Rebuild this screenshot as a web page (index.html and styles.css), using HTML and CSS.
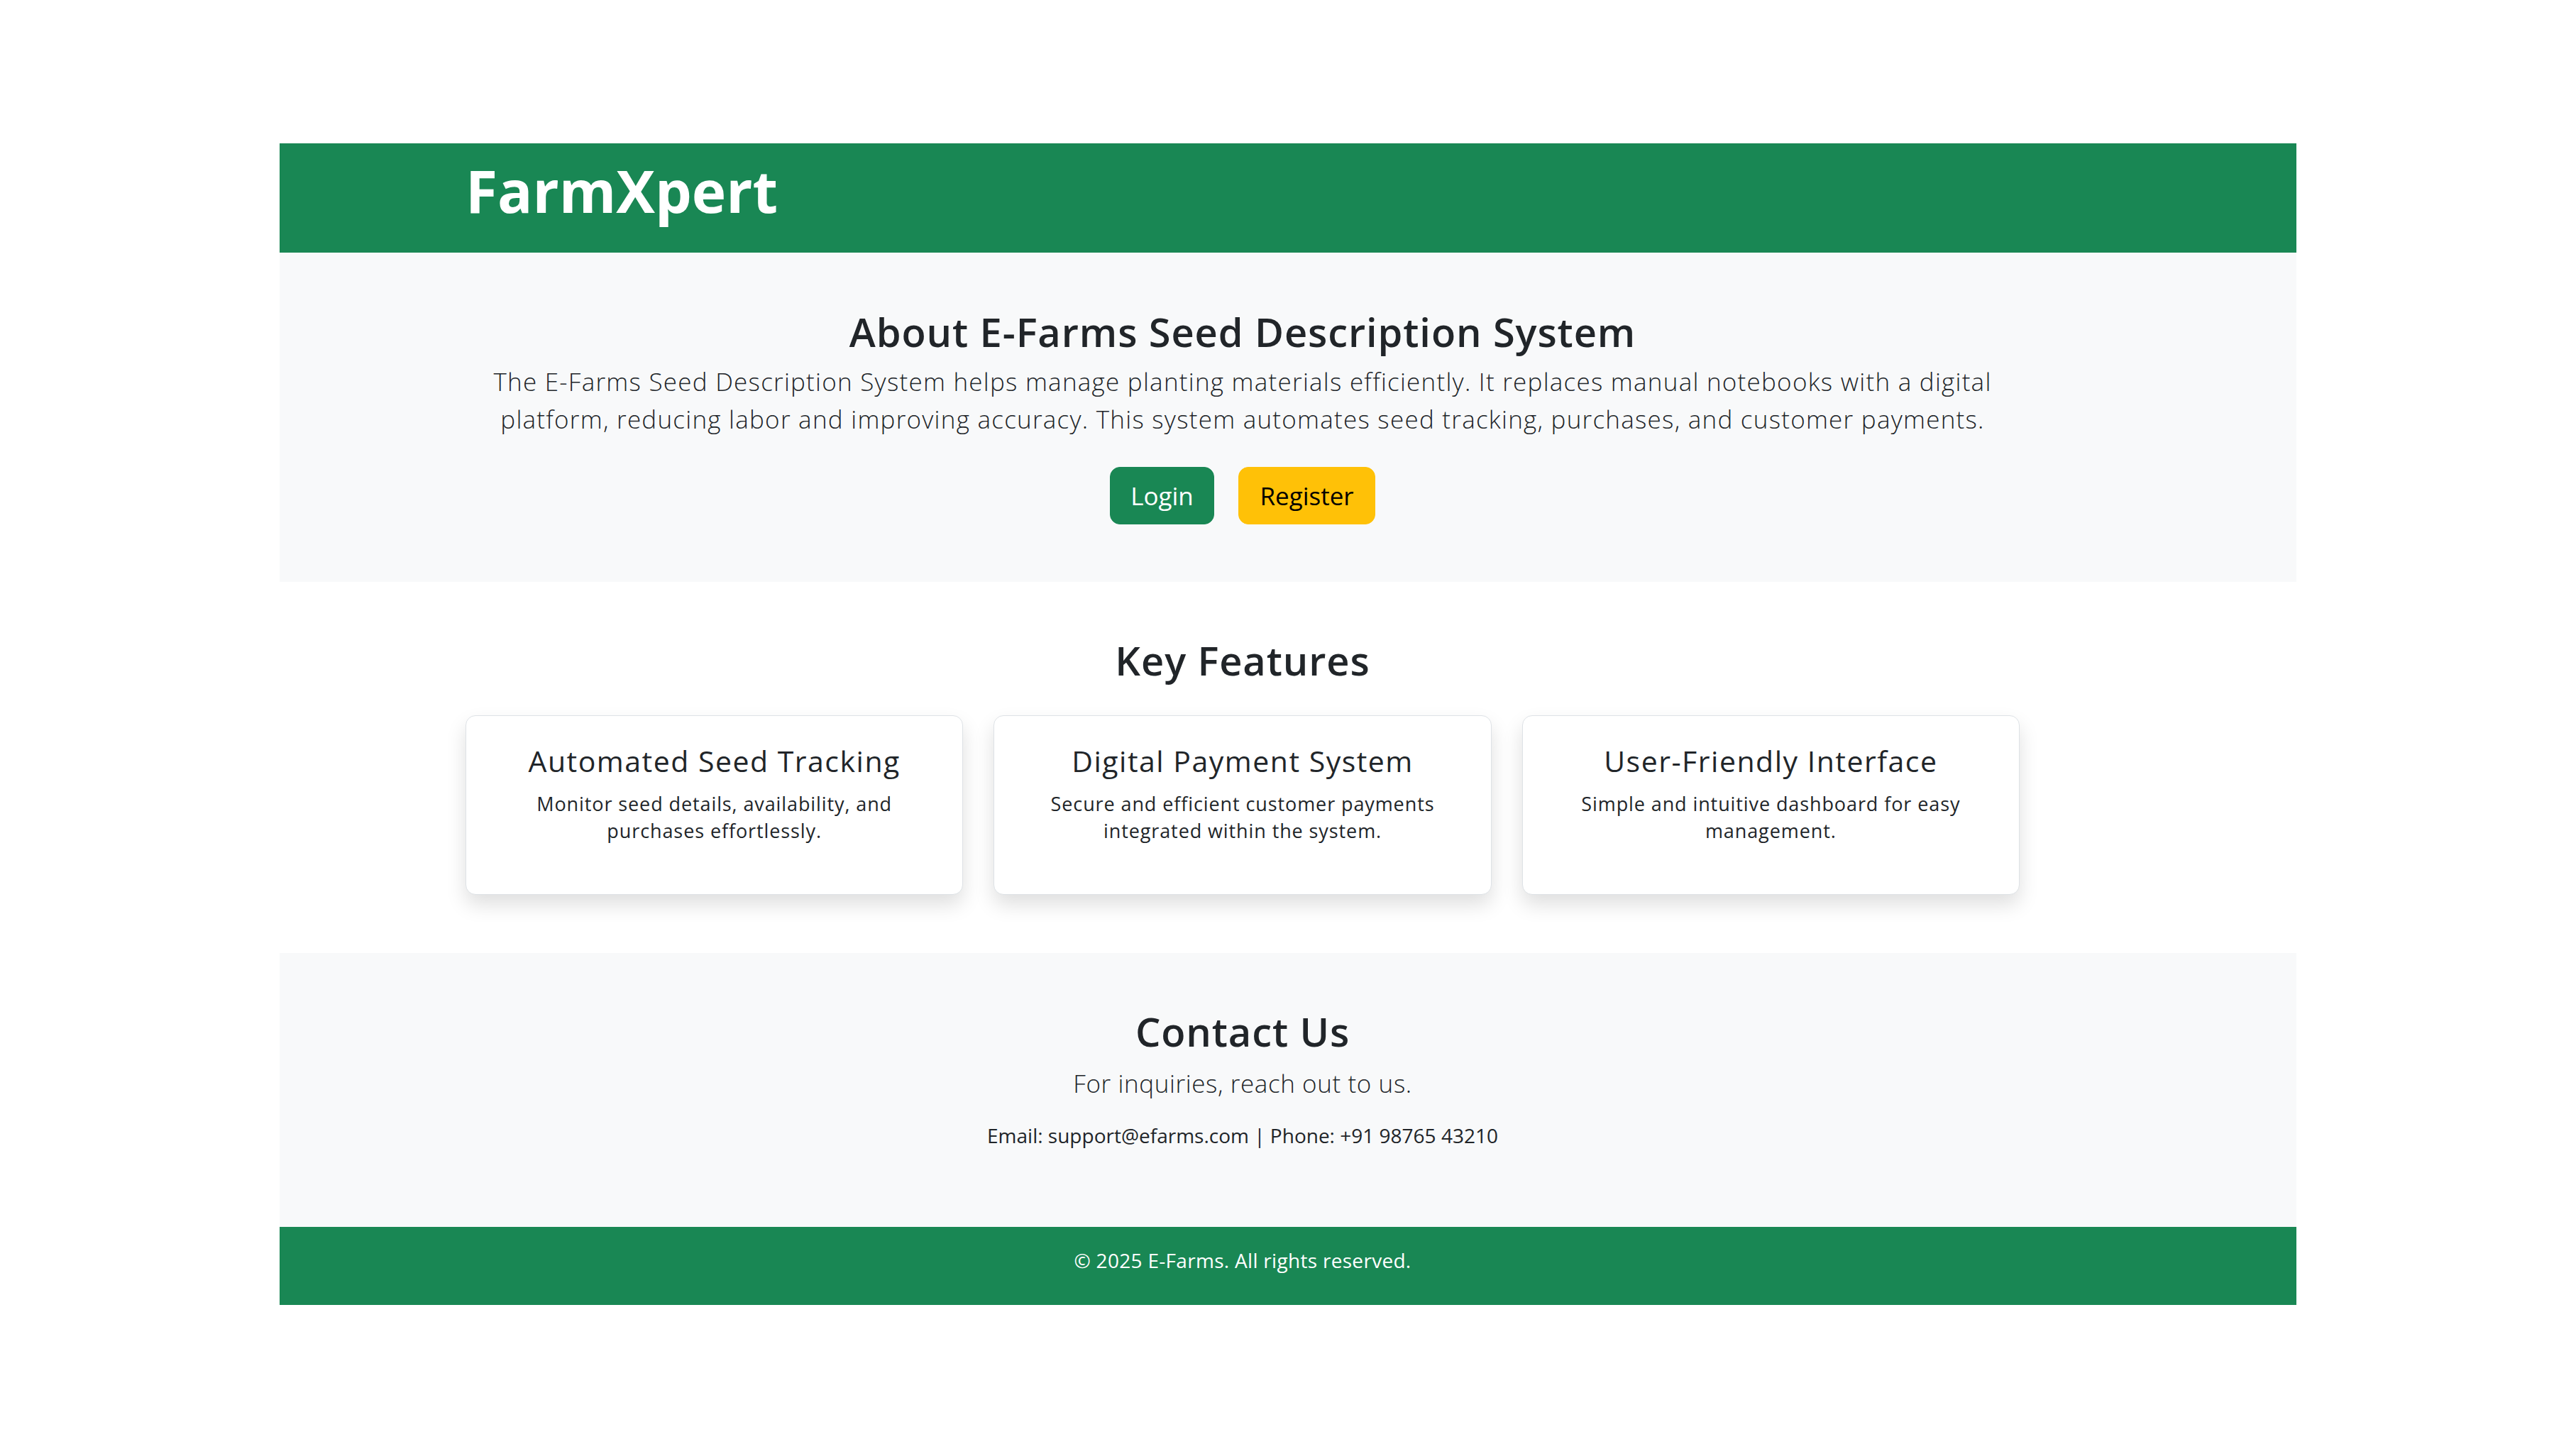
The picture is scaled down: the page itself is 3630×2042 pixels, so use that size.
FILE: index.html
```html
<!DOCTYPE html>
<html lang="en">
<head>
<meta charset="utf-8">
<title>FarmXpert</title>
<link rel="stylesheet" href="styles.css">
</head>
<body>
<div class="page">
  <header class="topbar">
    <div class="wrap"><span class="brand">FarmXpert</span></div>
  </header>

  <section class="about band-light">
    <div class="wrap center">
      <h2 class="heading about-title">About E-Farms Seed Description System</h2>
      <p class="lead about-text">The E-Farms Seed Description System helps manage planting materials efficiently. It replaces manual notebooks with a digital platform, reducing labor and improving accuracy. This system automates seed tracking, purchases, and customer payments.</p>
      <div class="actions">
        <a class="btn btn-login" href="#">Login</a>
        <a class="btn btn-register" href="#">Register</a>
      </div>
    </div>
  </section>

  <section class="features">
    <div class="wrap center">
      <h2 class="heading features-title">Key Features</h2>
      <div class="cards">
        <div class="card">
          <h4 class="card-title">Automated Seed Tracking</h4>
          <p class="card-text">Monitor seed details, availability, and purchases effortlessly.</p>
        </div>
        <div class="card">
          <h4 class="card-title">Digital Payment System</h4>
          <p class="card-text">Secure and efficient customer payments integrated within the system.</p>
        </div>
        <div class="card">
          <h4 class="card-title">User-Friendly Interface</h4>
          <p class="card-text">Simple and intuitive dashboard for easy management.</p>
        </div>
      </div>
    </div>
  </section>

  <section class="contact band-light">
    <div class="wrap center">
      <h2 class="heading contact-title">Contact Us</h2>
      <p class="lead contact-lead">For inquiries, reach out to us.</p>
      <p class="contact-info">Email: support@efarms.com | Phone: +91 98765 43210</p>
    </div>
  </section>

  <footer class="foot">
    <div class="wrap center">
      <p class="foot-text">© 2025 E-Farms. All rights reserved.</p>
    </div>
  </footer>
</div>
</body>
</html>
```

FILE: styles.css
```css
* { box-sizing: border-box; }

body {
  margin: 0;
  background: #ffffff;
  color: #212529;
  font-family: "Open Sans", "DejaVu Sans", sans-serif;
}

.page {
  width: 2842px;
  margin: 202px auto 0 auto;
}

.wrap {
  width: 2190px;
  margin-left: 262px;
}

.center { text-align: center; }

.band-light { background: #f8f9fa; }

/* header */
.topbar {
  background: #198754;
  height: 154px;
  padding-top: 18px;
}
.brand {
  display: block;
  color: #ffffff;
  font-weight: 700;
  font-size: 82px;
  line-height: 96px;
}

/* headings */
.heading {
  margin: 0;
  font-size: 56px;
  line-height: 67px;
  font-weight: 600;
  letter-spacing: 0.9px;
  color: #212529;
}

.lead {
  font-size: 35px;
  line-height: 52.5px;
  font-weight: 300;
  letter-spacing: 0.6px;
  color: #212529;
  margin: 0;
}

/* about */
.about {
  height: 464px;
  padding-top: 78px;
}
.about-text {
  margin: 11px auto 0 auto;
  max-width: 2150px;
  letter-spacing: 1.25px;
}
.actions {
  margin-top: 41px;
  display: flex;
  justify-content: center;
  gap: 34px;
}
.btn {
  display: block;
  height: 81px;
  line-height: 79px;
  border: 1px solid transparent;
  border-radius: 14px;
  font-size: 35px;
  text-decoration: none;
  text-align: center;
}
.btn-login {
  width: 147px;
  background: #198754;
  border-color: #198754;
  color: #ffffff;
}
.btn-register {
  width: 193px;
  background: #ffc107;
  border-color: #ffc107;
  color: #000000;
}

/* features */
.features {
  padding-top: 77px;
  padding-bottom: 82px;
  background: #ffffff;
}
.cards {
  margin-top: 44px;
  display: grid;
  grid-template-columns: repeat(3, 1fr);
  gap: 43px;
}
.card {
  background: #ffffff;
  border: 1px solid #dee2e6;
  border-radius: 14px;
  box-shadow: 0 14px 28px rgba(0, 0, 0, 0.13);
  height: 253px;
  padding: 40px 56px 0 56px;
}
.card-title {
  margin: 0;
  font-size: 41px;
  line-height: 47px;
  font-weight: 400;
  letter-spacing: 1.5px;
  color: #212529;
}
.card-text {
  margin: 18px 0 0 0;
  font-size: 27px;
  line-height: 38px;
  letter-spacing: 0.9px;
  color: #212529;
}

/* contact */
.contact {
  padding-top: 77px;
  height: 386px;
}
.contact-lead {
  margin-top: 14px;
}
.contact-info {
  margin: 25px 0 0 0;
  font-size: 28px;
  line-height: 42px;
}

/* footer */
.foot {
  background: #198754;
  height: 110px;
  padding-top: 26px;
}
.foot-text {
  margin: 0;
  color: #ffffff;
  font-size: 28px;
  line-height: 42px;
  letter-spacing: 0.3px;
}
```
